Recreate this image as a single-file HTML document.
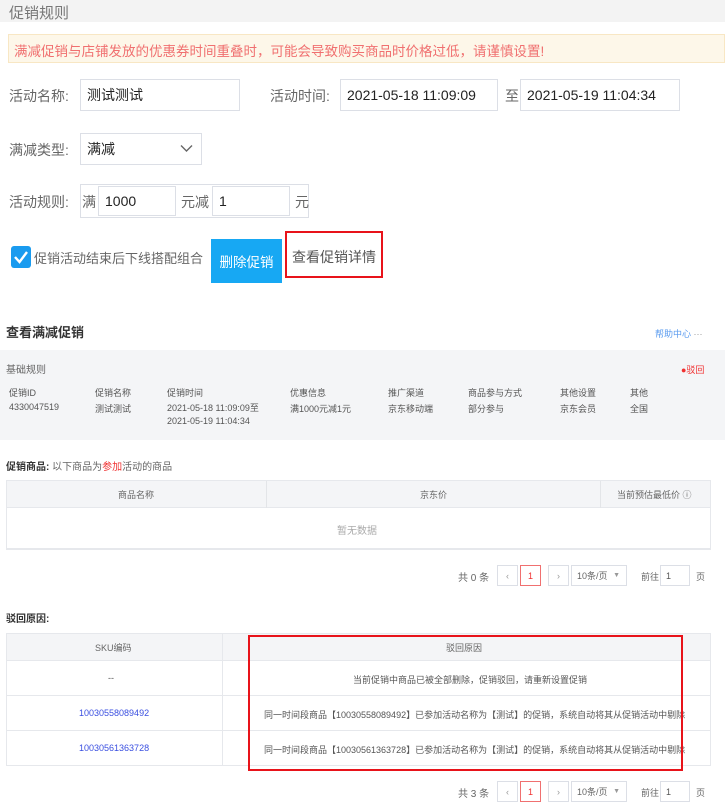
<!DOCTYPE html>
<html><head><meta charset="utf-8"><style>
*{margin:0;padding:0;box-sizing:border-box}
body{width:725px;height:797px;overflow:hidden;background:#fff;font-family:"Liberation Sans","Noto Sans CJK SC",sans-serif;position:relative;color:#333}
.a{position:absolute;white-space:nowrap}
.inp{position:absolute;border:1px solid #dcdfe6;background:#fff;font-size:14px;color:#222;padding-left:6px;display:flex;align-items:center}
.lbl{position:absolute;font-size:14px;color:#666}
.s{font-size:9px;color:#555}
.pb{position:absolute;border:1px solid #dcdfe6;background:#fff;font-size:9px;color:#999;display:flex;align-items:center;justify-content:center}
</style></head><body>
<div class="a" style="left:0;top:0;width:725px;height:22px;background:#f3f3f3"></div>
<div class="a" style="left:9px;top:2px;font-size:15px;color:#777">促销规则</div>
<div class="a" style="left:8px;top:34px;width:717px;height:29px;background:#fdf7e9;border:1px solid #f8e7c4"></div>
<div class="a" style="left:14px;top:40px;font-size:13.5px;color:#f07070">满减促销与店铺发放的优惠券时间重叠时，可能会导致购买商品时价格过低，请谨慎设置!</div>

<div class="lbl" style="left:9px;top:86px">活动名称:</div>
<div class="inp" style="left:80px;top:79px;width:160px;height:32px">测试测试</div>
<div class="lbl" style="left:270px;top:86px">活动时间:</div>
<div class="inp" style="left:340px;top:79px;width:158px;height:32px">2021-05-18 11:09:09</div>
<div class="lbl" style="left:505px;top:86px">至</div>
<div class="inp" style="left:520px;top:79px;width:160px;height:32px">2021-05-19 11:04:34</div>

<div class="lbl" style="left:9px;top:140px">满减类型:</div>
<div class="inp" style="left:80px;top:133px;width:122px;height:32px">满减
<svg style="position:absolute;right:8px;top:10px" width="13" height="9" viewBox="0 0 13 9"><path d="M1 1.5L6.5 7L12 1.5" fill="none" stroke="#666" stroke-width="1.4"/></svg></div>

<div class="lbl" style="left:9px;top:192px">活动规则:</div>
<div class="a" style="left:80px;top:184px;width:229px;height:34px;border:1px solid #dcdfe6"></div>
<div class="lbl" style="left:82px;top:192px">满</div>
<div class="inp" style="left:98px;top:186px;width:78px;height:30px">1000</div>
<div class="lbl" style="left:181px;top:192px">元减</div>
<div class="inp" style="left:212px;top:186px;width:78px;height:30px">1</div>
<div class="lbl" style="left:295px;top:192px">元</div>

<div class="a" style="left:11px;top:246px;width:20px;height:22px;background:#1a9bef;border-radius:3px"></div>
<svg class="a" style="left:11px;top:246px" width="20" height="22" viewBox="0 0 20 22"><path d="M4 11L8.5 16L16 6" fill="none" stroke="#fff" stroke-width="2.4"/></svg>
<div class="lbl" style="left:34px;top:248px;font-size:13px">促销活动结束后下线搭配组合</div>
<div class="a" style="left:211px;top:239px;width:71px;height:44px;background:#17a8f3;color:#fff;font-size:13.5px;display:flex;align-items:center;justify-content:center">删除促销</div>
<div class="a" style="left:285px;top:231px;width:98px;height:47px;border:2px solid #e8131a"></div>
<div class="lbl" style="left:292px;top:247px;color:#555">查看促销详情</div>

<div class="a" style="left:6px;top:322px;font-size:13px;font-weight:bold;color:#333">查看满减促销</div>
<div class="a" style="left:655px;top:327px;font-size:9px;color:#5a9bef">帮助中心 <span style="color:#999">···</span></div>
<div class="a" style="left:0;top:350px;width:725px;height:90px;background:#f4f5f7"></div>
<div class="a" style="left:6px;top:361px;font-size:10px;color:#666">基础规则</div>
<div class="a" style="left:681px;top:363px;font-size:9px;color:#f03030">●驳回</div>
<div class="a s" style="left:9px;top:386px">促销ID</div><div class="a s" style="left:9px;top:402px">4330047519</div>
<div class="a s" style="left:95px;top:386px">促销名称</div><div class="a s" style="left:95px;top:402px">测试测试</div>
<div class="a s" style="left:167px;top:386px">促销时间</div><div class="a s" style="left:167px;top:402px;line-height:13px">2021-05-18 11:09:09至<br>2021-05-19 11:04:34</div>
<div class="a s" style="left:290px;top:386px">优惠信息</div><div class="a s" style="left:290px;top:402px">满1000元减1元</div>
<div class="a s" style="left:388px;top:386px">推广渠道</div><div class="a s" style="left:388px;top:402px">京东移动端</div>
<div class="a s" style="left:468px;top:386px">商品参与方式</div><div class="a s" style="left:468px;top:402px">部分参与</div>
<div class="a s" style="left:560px;top:386px">其他设置</div><div class="a s" style="left:560px;top:402px">京东会员</div>
<div class="a s" style="left:630px;top:386px">其他</div><div class="a s" style="left:630px;top:402px">全国</div>

<div class="a" style="left:6px;top:458px;font-size:10px;color:#666"><b style="color:#333">促销商品:</b> 以下商品为<span style="color:#f03030">参加</span>活动的商品</div>
<div class="a" style="left:6px;top:480px;width:705px;height:70px;border:1px solid #e6e8ec;border-bottom:2px solid #e6e8ec"></div>
<div class="a" style="left:7px;top:481px;width:703px;height:27px;background:#f4f5f7;border-bottom:1px solid #e6e8ec"></div>
<div class="a" style="left:266px;top:481px;width:1px;height:27px;background:#e3e5e8"></div>
<div class="a" style="left:600px;top:481px;width:1px;height:27px;background:#e3e5e8"></div>
<div class="a s" style="left:118px;top:488px;color:#666">商品名称</div>
<div class="a s" style="left:420px;top:488px;color:#666">京东价</div>
<div class="a s" style="left:617px;top:488px;color:#666">当前预估最低价 ⓘ</div>
<div class="a" style="left:337px;top:522px;font-size:10px;color:#aaa">暂无数据</div>

<div class="a" style="left:458px;top:569px;font-size:10px;color:#666">共 0 条</div>
<div class="pb" style="left:497px;top:565px;width:21px;height:21px">‹</div>
<div class="pb" style="left:520px;top:565px;width:21px;height:21px;border-color:#f07070;color:#f03030">1</div>
<div class="pb" style="left:548px;top:565px;width:21px;height:21px">›</div>
<div class="pb" style="left:571px;top:565px;width:56px;height:21px;color:#666;justify-content:flex-start;padding-left:5px">10条/页 <span style="position:absolute;right:6px;font-size:7px;color:#999">▼</span></div>
<div class="a s" style="left:641px;top:570px;color:#666">前往</div>
<div class="pb" style="left:660px;top:565px;width:30px;height:21px;color:#555;justify-content:flex-start;padding-left:5px">1</div>
<div class="a s" style="left:696px;top:570px;color:#666">页</div>

<div class="a" style="left:6px;top:610px;font-size:10px;font-weight:bold;color:#333">驳回原因:</div>
<div class="a" style="left:6px;top:633px;width:705px;height:133px;border:1px solid #e6e8ec"></div>
<div class="a" style="left:7px;top:634px;width:703px;height:27px;background:#f4f5f7;border-bottom:1px solid #e6e8ec"></div>
<div class="a" style="left:222px;top:634px;width:1px;height:131px;background:#e6e8ec"></div>
<div class="a" style="left:7px;top:695px;width:703px;height:1px;background:#e6e8ec"></div>
<div class="a" style="left:7px;top:730px;width:703px;height:1px;background:#e6e8ec"></div>
<div class="a s" style="left:95px;top:641px;color:#666">SKU编码</div>
<div class="a s" style="left:446px;top:641px;color:#666">驳回原因</div>
<div class="a s" style="left:108px;top:673px">--</div>
<div class="a s" style="left:353px;top:673px">当前促销中商品已被全部删除，促销驳回，请重新设置促销</div>
<div class="a s" style="left:79px;top:708px;color:#3a4fe0">10030558089492</div>
<div class="a s" style="left:264px;top:708px">同一时间段商品【10030558089492】已参加活动名称为【测试】的促销，系统自动将其从促销活动中剔除</div>
<div class="a s" style="left:79px;top:743px;color:#3a4fe0">10030561363728</div>
<div class="a s" style="left:264px;top:743px">同一时间段商品【10030561363728】已参加活动名称为【测试】的促销，系统自动将其从促销活动中剔除</div>
<div class="a" style="left:248px;top:635px;width:435px;height:136px;border:2px solid #e8131a"></div>

<div class="a" style="left:458px;top:785px;font-size:10px;color:#666">共 3 条</div>
<div class="pb" style="left:497px;top:781px;width:21px;height:21px">‹</div>
<div class="pb" style="left:520px;top:781px;width:21px;height:21px;border-color:#f07070;color:#f03030">1</div>
<div class="pb" style="left:548px;top:781px;width:21px;height:21px">›</div>
<div class="pb" style="left:571px;top:781px;width:56px;height:21px;color:#666;justify-content:flex-start;padding-left:5px">10条/页 <span style="position:absolute;right:6px;font-size:7px;color:#999">▼</span></div>
<div class="a s" style="left:641px;top:786px;color:#666">前往</div>
<div class="pb" style="left:660px;top:781px;width:30px;height:21px;color:#555;justify-content:flex-start;padding-left:5px">1</div>
<div class="a s" style="left:696px;top:786px;color:#666">页</div>
</body></html>
